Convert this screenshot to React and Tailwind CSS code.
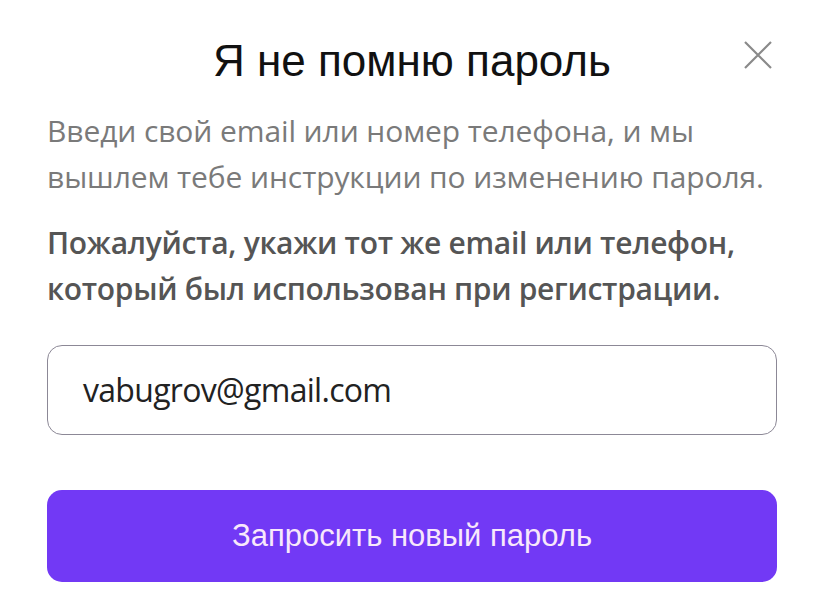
export default function App() {
  return (
    <div className="w-[815px] h-[600px] bg-white relative overflow-hidden">
      <div className="flex flex-col pl-[47px] pr-[38px] pt-[36px]">
        <div className="relative flex justify-center">
          <h1 className="text-[44px] leading-[50px] text-[#111] font-['Liberation_Sans',Arial,sans-serif]">Я не помню пароль</h1>
          <button className="absolute right-[5px] top-[5px] w-[28px] h-[28px] flex items-center justify-center text-[#8a8a8a]">
            <svg width="28" height="28" viewBox="0 0 28 28" fill="none" stroke="currentColor" strokeWidth="2.2">
              <path d="M1 1 L27 27 M27 1 L1 27" />
            </svg>
          </button>
        </div>
        <div className="mt-[22px] text-[30px] leading-[46px] text-[#7a7a7a] font-['Open_Sans','Noto_Sans',sans-serif] tracking-[-0.1px] whitespace-nowrap">
          <p>Введи свой email или номер телефона, и мы</p>
          <p>вышлем тебе инструкции по изменению пароля.</p>
        </div>
        <div className="mt-[20px] text-[30px] leading-[46px] text-[#555] font-semibold font-['Open_Sans','Noto_Sans',sans-serif] tracking-[-0.3px] whitespace-nowrap">
          <p>Пожалуйста, укажи тот же email или телефон,</p>
          <p>который был использован при регистрации.</p>
        </div>
        <div className="mt-[33px] h-[90px] rounded-[15px] border border-[#8c8896] flex items-center px-[35px]">
          <span className="text-[32px] text-[#222] font-['Open_Sans','Noto_Sans',sans-serif] tracking-[-0.7px]">vabugrov@gmail.com</span>
        </div>
        <button className="mt-[55px] h-[92px] rounded-[15px] bg-[#7239f5] flex items-center justify-center text-[31px] text-[#f8e8fb] font-['Liberation_Sans',Arial,sans-serif]">
          Запросить новый пароль
        </button>
      </div>
    </div>
  );
}
